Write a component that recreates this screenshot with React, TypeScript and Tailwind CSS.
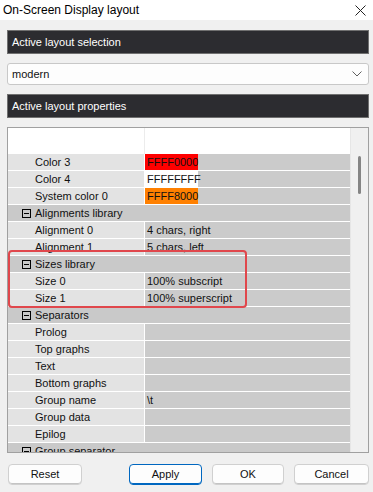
import React from "react";

type Row =
  | { kind: "cat"; label: string }
  | { kind: "prop"; name: string; value?: string; swatch?: string };

const rows: Row[] = [
  { kind: "prop", name: "Color 3", value: "FFFF0000", swatch: "bg-[#ff0000]" },
  { kind: "prop", name: "Color 4", value: "FFFFFFFF", swatch: "bg-[#ffffff]" },
  { kind: "prop", name: "System color 0", value: "FFFF8000", swatch: "bg-[#ff8000]" },
  { kind: "cat", label: "Alignments library" },
  { kind: "prop", name: "Alignment 0", value: "4 chars, right" },
  { kind: "prop", name: "Alignment 1", value: "5 chars, left" },
  { kind: "cat", label: "Sizes library" },
  { kind: "prop", name: "Size 0", value: "100% subscript" },
  { kind: "prop", name: "Size 1", value: "100% superscript" },
  { kind: "cat", label: "Separators" },
  { kind: "prop", name: "Prolog" },
  { kind: "prop", name: "Top graphs" },
  { kind: "prop", name: "Text" },
  { kind: "prop", name: "Bottom graphs" },
  { kind: "prop", name: "Group name", value: "\\t" },
  { kind: "prop", name: "Group data" },
  { kind: "prop", name: "Epilog" },
  { kind: "cat", label: "Group separator" },
];

function MinusBox() {
  return (
    <svg width="9" height="9" viewBox="0 0 9 9" className="block">
      <rect x="0.5" y="0.5" width="8" height="8" fill="none" stroke="#000" strokeWidth="1" />
      <line x1="2" y1="4.5" x2="7" y2="4.5" stroke="#000" strokeWidth="1" />
    </svg>
  );
}

function GridRow({ row }: { row: Row }) {
  if (row.kind === "cat") {
    return (
      <div className="flex h-[17px] shrink-0 items-center border-b border-white bg-[#c9c9c9]">
        <div className="flex w-[27px] shrink-0 justify-end pr-[3px]">
          <div className="mr-[1px]">
            <MinusBox />
          </div>
        </div>
        <span className="leading-[16px]">{row.label}</span>
      </div>
    );
  }
  return (
    <div className="flex h-[17px] shrink-0 border-b border-white">
      <div className="flex w-[136px] shrink-0 items-center bg-[#e3e3e3] pl-[27px] leading-[16px]">
        {row.name}
      </div>
      <div className="w-[1px] shrink-0 bg-white" />
      <div className="flex flex-1 items-center bg-[#cbcbcb] leading-[16px]">
        {row.swatch ? (
          <div className={`flex h-full w-[53px] items-center pl-[2px] ${row.swatch}`}>
            {row.value}
          </div>
        ) : (
          <span className="pl-[2px]">{row.value}</span>
        )}
      </div>
    </div>
  );
}

function Button({ label, primary, w }: { label: string; primary?: boolean; w: string }) {
  return (
    <div
      className={`flex h-[21px] items-center justify-center rounded-[4px] border bg-[#fdfdfd] ${w} ${
        primary ? "border-[#0067c0] shadow-[inset_0_-1px_0_#0067c0]" : "border-[#d0d0d0] shadow-[inset_0_-1px_0_#c4c4c4]"
      }`}
    >
      {label}
    </div>
  );
}

export default function App() {
  return (
    <div
      className="relative h-[492px] w-[373px] overflow-hidden bg-[#f0f0f0] text-[11px] text-[#111]"
      style={{ fontFamily: '"Liberation Sans", Arial, sans-serif' }}
    >
      {/* Title bar */}
      <div className="flex h-[20px] items-center justify-between bg-white pl-[3px] pr-[6px]">
        <span className="text-[12px] leading-[20px] text-black">On-Screen Display layout</span>
        <svg width="11" height="11" viewBox="0 0 11 11" className="mr-[1px]">
          <line x1="0.5" y1="0.5" x2="10.5" y2="10.5" stroke="#222" strokeWidth="1" />
          <line x1="10.5" y1="0.5" x2="0.5" y2="10.5" stroke="#222" strokeWidth="1" />
        </svg>
      </div>

      <div className="ml-[7px] flex w-[362px] flex-col">
        {/* Header 1 */}
        <div className="mt-[10px] flex h-[24px] items-center border border-[#707070] bg-[#2c2c30] pl-[4px] text-white">
          Active layout selection
        </div>

        {/* Combo */}
        <div className="mt-[9px] flex h-[22px] items-center justify-between rounded-[3px] border border-[#c8c8c8] bg-[#fdfdfd] pl-[4px] pr-[6px]">
          <span>modern</span>
          <svg width="10" height="6" viewBox="0 0 10 6">
            <polyline points="0.5,0.5 5,5 9.5,0.5" fill="none" stroke="#606060" strokeWidth="1" />
          </svg>
        </div>

        {/* Header 2 */}
        <div className="mt-[9px] flex h-[24px] items-center border border-[#707070] bg-[#2c2c30] pl-[4px] text-white">
          Active layout properties
        </div>

        {/* Property grid */}
        <div className="mt-[9px] flex h-[326px] border border-[#a0a0a0] bg-white">
          <div className="flex w-[342px] flex-col overflow-hidden">
            <div className="flex h-[26px] shrink-0">
              <div className="w-[136px] shrink-0" />
              <div className="w-[1px] shrink-0 bg-[#ececec]" />
            </div>
            {rows.map((r, i) => (
              <GridRow key={i} row={r} />
            ))}
          </div>
          <div className="w-[1px] shrink-0 bg-[#e6e6e6]" />
          <div className="flex w-[17px] shrink-0 justify-center bg-[#f0f0f0] pt-[28px]">
            <div className="h-[38px] w-[3px] rounded-full bg-[#858585]" />
          </div>
        </div>

        {/* Buttons */}
        <div className="mt-[11px] flex items-center pl-[1px]">
          <Button label="Reset" w="w-[74px]" />
          <div className="ml-auto flex gap-[10px]">
            <Button label="Apply" primary w="w-[73px]" />
            <Button label="OK" w="w-[72px]" />
            <Button label="Cancel" w="w-[75px]" />
          </div>
        </div>
      </div>

      {/* Red annotation highlight */}
      <div className="pointer-events-none absolute left-[8px] top-[250px] h-[58px] w-[239px] rounded-[4px] border-2 border-[#e0474c]" />
    </div>
  );
}
